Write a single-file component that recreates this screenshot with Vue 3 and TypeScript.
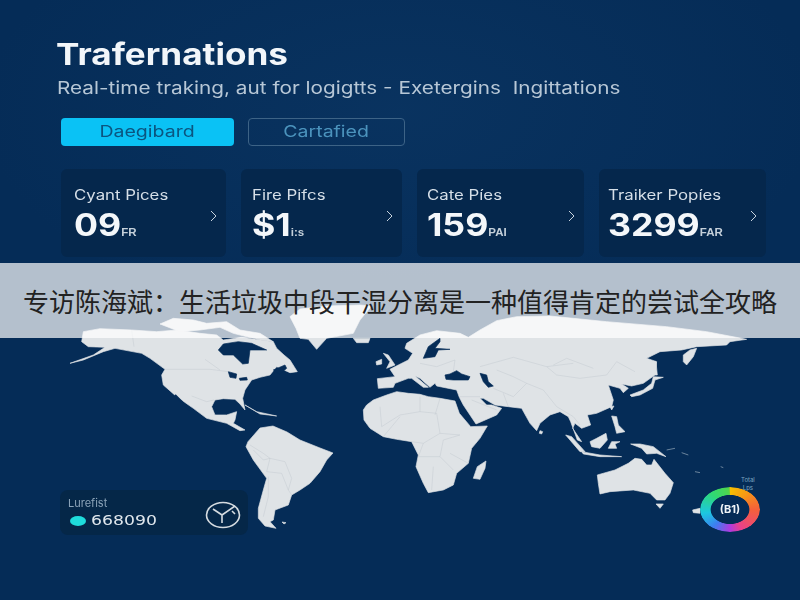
<script setup lang="ts">
interface Stat {
  label: string
  value: string
  unit: string
}

const stats: Stat[] = [
  { label: 'Cyant Pices', value: '09', unit: 'FR' },
  { label: 'Fire Pifcs', value: '$1', unit: 'i:s' },
  { label: 'Cate Píes', value: '159', unit: 'PAI' },
  { label: 'Traiker Popíes', value: '3299', unit: 'FAR' }
]

const borders: string[] = [
  'M215,90 L222,140', 'M315,208 L450,208 L505,215', 'M435,178 L480,210', 'M395,288 L440,305 L462,300'
]
const borders7: string[] = [
  'M120,320 L125,380 L180,345 L240,335 L240,290', 'M240,335 L290,340 L300,400 L360,405', 'M285,345 L300,295',
  'M130,410 L180,350', 'M215,425 L250,430 L300,400', 'M250,430 L235,470 L300,470 L340,510', 'M300,470 L310,420 L360,405',
  'M280,500 L275,570', 'M330,460 L385,490', 'M240,190 L290,200 L345,180 L340,215', 'M420,200 L520,172 L620,200 L700,190',
  'M620,200 L650,225 L720,235 L800,225 L830,185 L885,215', 'M460,265 L520,290 L560,250 L610,270 L650,320 L700,350',
  'M490,280 L505,320', 'M560,250 L520,230 L470,210', 'M640,195 L680,175 L760,205', 'M700,350 L720,375',
  'M360,290 L420,290', 'M395,300 L470,330'
]
const bordersS: string[] = [
  'M100,30 L130,60 L150,55 L195,65 L215,115 L205,150', 'M150,55 L140,95 L185,100 L205,150', 'M145,110 L145,170 L130,230',
  'M205,150 L215,165', 'M90,15 L130,40 L150,55'
]
</script>

<template>
  <main class="page">
    <svg class="map" viewBox="0 0 800 600" aria-hidden="true">
      <g transform="translate(60 300) scale(.3333)">
        <path class="land" d="M70,95 L120,86 L215,90 L290,95 L350,90 L420,100 L470,105 L490,120 L545,112 L640,125 L650,145 L672,165 L690,180 L712,215 L690,218 L650,200 L630,225 L600,232 L575,240 L565,255 L555,270 L548,295 L555,330 L540,312 L525,298 L490,296 L465,300 L455,320 L465,345 L500,345 L530,335 L525,360 L520,370 L555,390 L540,392 L500,370 L440,355 L400,325 L350,290 L310,255 L305,225 L315,208 L270,175 L245,160 L165,145 L130,155 L70,180 L30,190 L100,165 L135,142 L85,140 L65,125 Z" />
        <path class="land" d="M300,72 L340,55 L400,60 L440,70 L500,65 L540,90 L600,100 L640,125 L600,120 L520,100 L480,82 L420,90 L360,95 Z" />
        <path class="land" d="M690,50 L720,27 L800,18 L900,15 L935,18 L900,60 L880,100 L800,115 L770,148 L745,118 L720,115 L708,85 Z" />
        <path class="sea" d="M475,150 L490,132 L535,125 L575,130 L620,150 L570,150 L565,190 L548,192 L520,165 L490,165 Z" />
        <path class="sea" d="M640,210 L675,195 L680,205 L660,222 Z" />
        <path class="sea" d="M505,215 L530,222 L528,235 L510,232 Z" />
        <path class="sea" d="M538,235 L560,232 L562,240 L540,241 Z" />
        <path class="shore" d="M345,285 L390,330" />
        <path class="land" d="M555,315 L590,335 L650,348 L600,342 Z" />
        <path class="line" v-for="d in borders" :key="d" :d="d" />
      </g>

      <g transform="translate(340 300) scale(.3333)">
        <path class="land" d="M112,236 L165,230 L150,208 L175,195 L205,180 L218,160 L195,145 L200,130 L240,105 L290,92 L360,100 L385,112 L420,90 L470,62 L530,50 L630,48 L700,55 L800,65 L980,80 L1100,95 L1220,118 L1170,125 L1160,135 L1070,140 L1025,150 L960,155 L920,175 L950,185 L945,225 L910,250 L875,258 L845,252 L865,265 L850,278 L840,265 L805,255 L820,300 L815,320 L770,340 L742,345 L752,375 L725,385 L705,370 L698,385 L725,425 L712,420 L692,365 L685,350 L660,335 L630,345 L600,370 L590,392 L570,370 L545,325 L505,320 L465,315 L430,295 L420,295 L440,315 L455,315 L485,325 L470,345 L408,372 L370,315 L358,292 L350,270 L290,258 L285,250 L270,262 L240,235 L225,228 L265,262 L250,262 L215,235 L205,235 L165,250 L160,262 L115,265 Z" />
        <path class="land" d="M70,330 L80,315 L100,300 L140,285 L170,275 L205,280 L240,283 L265,290 L300,295 L345,303 L358,340 L392,380 L442,378 L420,415 L395,445 L385,490 L350,520 L340,555 L310,570 L265,578 L250,550 L228,500 L235,465 L215,425 L170,418 L130,410 L90,385 L72,360 Z" />
        <path class="sea" d="M250,175 L265,140 L300,115 L300,125 L285,145 L330,148 L295,150 L285,170 Z" />
        <path class="sea" d="M315,225 L330,222 L350,212 L365,222 L390,230 L385,240 L340,240 L318,238 Z" />
        <path class="sea" d="M420,220 L440,225 L445,245 L460,258 L445,262 L430,245 Z" />
        <path class="land" d="M130,160 L145,165 L165,195 L140,205 L150,185 Z" />
        <path class="land" d="M108,185 L125,178 L125,192 L110,195 Z" />
        <path class="land" d="M40,115 L90,115 L85,128 L50,128 Z" />
        <path class="land" d="M400,535 L412,500 L438,483 L435,505 L420,538 Z" />
        <path class="land" d="M600,392 L608,395 L605,402 L598,400 Z" />
        <path class="line" v-for="d in borders7" :key="d" :d="d" />
      </g>

      <g transform="translate(500 300) scale(.3333)">
        <path class="land" d="M197,405 L215,410 L255,455 L240,455 Z" />
        <path class="land" d="M245,455 L300,465 L365,470 L300,470 L250,462 Z" />
        <path class="land" d="M270,425 L290,415 L318,400 L322,420 L300,445 L275,440 Z" />
        <path class="land" d="M325,445 L335,425 L360,425 L345,432 L350,445 Z" />
        <path class="land" d="M335,348 L350,350 L355,375 L375,395 L350,400 L345,380 Z" />
        <path class="land" d="M392,432 L420,432 L460,440 L498,470 L470,460 L440,462 L425,445 Z" />
        <path class="land" d="M390,285 L430,270 L455,250 L460,230 L490,232 L465,240 L458,265 L420,285 L395,290 Z" />
        <path class="land" d="M462,185 L468,185 L472,225 L464,225 Z" />
        <path class="land" d="M550,165 L570,150 L590,145 L580,170 L560,195 L550,185 Z" />
        <path class="land" d="M330,320 L342,318 L335,330 Z" />
        <path class="land" d="M292,525 L345,510 L385,490 L405,475 L425,478 L440,495 L455,495 L462,478 L495,520 L520,548 L510,580 L495,600 L470,600 L450,580 L400,570 L330,575 L300,582 L295,550 Z" />
        <path class="land" d="M468,612 L490,612 L480,625 Z" />
        <path class="land" d="M578,630 L600,625 L600,640 L580,638 Z" />
        <path class="speck" d="M500,450 L525,445 M545,458 L565,465 M585,515 L600,518 M662,500 L670,503" />
      </g>

      <g transform="translate(220 440) scale(.3333)">
        <path class="land" d="M78,20 L84,5 L120,-36 L159,-42 L201,-24 L240,0 L300,24 L339,39 L320,60 L300,95 L270,130 L240,150 L215,165 L205,195 L165,210 L160,240 L150,245 L168,265 L135,258 L115,235 L115,205 L130,150 L140,115 L100,60 Z" />
        <path class="land" d="M186,246 L198,248 L192,252 Z" />
        <path class="line" v-for="d in bordersS" :key="d" :d="d" />
      </g>
    </svg>

    <section class="content">
      <h1 class="title"><span class="wide-title">Trafernations</span></h1>
      <p class="subtitle"><span class="wide-sub">Real-time traking, aut for logigtts - Exetergins&nbsp; Ingittations</span></p>

      <nav class="tabs">
        <button class="tab active" type="button"><span class="wide-tab">Daegibard</span></button>
        <button class="tab outline" type="button"><span class="wide-tab">Cartafied</span></button>
      </nav>

      <div class="stats">
        <article v-for="s in stats" :key="s.label" class="card">
          <div class="card-text">
            <div class="label"><span class="wide-label">{{ s.label }}</span></div>
            <div class="value"><span class="wide-value">{{ s.value }}<small>{{ s.unit }}</small></span></div>
          </div>
          <svg class="chevron" width="7" height="12" viewBox="0 0 7 12">
            <path d="M1,1 L6,6 L1,11" />
          </svg>
        </article>
      </div>
    </section>

    <aside class="live">
      <div>
        <div class="live-label">Lurefist</div>
        <div class="live-row"><i class="dot"></i><span class="wide-live">668090</span></div>
      </div>
      <svg class="clock" width="36" height="28" viewBox="0 0 36 28">
        <ellipse cx="18" cy="14" rx="16.5" ry="12.5" />
        <path d="M17,14 L8,8 M17,14 L30,5 M17,14 L17,22 M27,10 L30,13" />
      </svg>
    </aside>

    <aside class="gauge">
      <div class="gauge-caption">Total<br />Lps</div>
      <div class="ring"></div>
      <b class="ring-text">(B1)</b>
    </aside>

    <div class="banner">专访陈海斌：生活垃圾中段干湿分离是一种值得肯定的尝试全攻略</div>
  </main>
</template>

<style>
html,
body {
  margin: 0;
  background: #052c57;
}
</style>

<style scoped>
.page {
  position: relative;
  width: 800px;
  height: 600px;
  overflow: hidden;
  box-sizing: border-box;
  background:
    radial-gradient(ellipse 420px 220px at 400px 110px, rgba(26, 78, 130, 0.2), transparent),
    #052c57;
  font-family: Inter, "Liberation Sans", sans-serif;
}

.map {
  position: absolute;
  inset: 0;
  width: 800px;
  height: 600px;
  filter: blur(0.4px);
}

.land {
  fill: #dfe3e6;
  stroke: #dfe3e6;
  stroke-width: 2;
  stroke-linejoin: round;
}

.sea {
  fill: #052c57;
  stroke: #052c57;
  stroke-width: 2;
  stroke-linejoin: round;
}

.shore {
  fill: none;
  stroke: #052c57;
  stroke-width: 6;
}

.speck {
  fill: none;
  stroke: #9fb0c0;
  stroke-width: 2;
}

.line {
  fill: none;
  stroke: #bfc6cd;
  stroke-width: 1.3;
}

.content {
  position: relative;
  padding: 38px 33px 0 56px;
}

.title {
  margin: 0;
  font-size: 30px;
  line-height: 32px;
  font-weight: 700;
  color: #f2f6fa;
  filter: blur(0.3px);
}

.wide-title,
.wide-sub,
.wide-label,
.wide-value,
.wide-live {
  display: inline-block;
  transform-origin: left center;
}

.wide-tab {
  display: inline-block;
  transform: scaleX(1.22);
}

.wide-title {
  transform: scaleX(1.17);
}

.wide-sub {
  transform: scaleX(1.22);
}

.wide-label {
  transform: scaleX(1.2);
}

.wide-value {
  transform: scaleX(1.15);
}

.wide-live {
  transform: scaleX(1.28);
}

.subtitle {
  margin: 2px 0 0 1px;
  font-size: 17px;
  line-height: 32px;
  color: #b7c7d6;
  white-space: nowrap;
  filter: blur(0.3px);
}

.tabs {
  display: flex;
  gap: 14px;
  margin: 14px 0 0 5px;
}

.tab {
  height: 28px;
  padding: 0 0 2px;
  box-sizing: border-box;
  font-family: inherit;
  font-size: 16px;
  border-radius: 4px;
  filter: blur(0.3px);
}

.active {
  width: 173px;
  border: 0;
  background: #0ac2f5;
  color: #0b5580;
}

.outline {
  width: 157px;
  border: 1.5px solid #3d6386;
  background: transparent;
  color: #4b93bd;
}

.stats {
  display: grid;
  grid-template-columns: 165px 161px 167px 167px;
  gap: 15px;
  margin: 23px 0 0 5px;
}

.card {
  display: flex;
  justify-content: space-between;
  height: 88px;
  box-sizing: border-box;
  padding: 16px 9px 0 13px;
  border-radius: 6px;
  background: #05274c;
}

.card:nth-child(2) {
  padding-left: 11px;
}

.card:nth-child(3) {
  padding-left: 10px;
}

.card:nth-child(4) {
  padding-left: 9px;
}

.label {
  font-size: 14px;
  line-height: 20px;
  color: #d6dfe8;
  white-space: nowrap;
  filter: blur(0.25px);
}

.value {
  margin-top: 2px;
  font-size: 31px;
  line-height: 36px;
  font-weight: 700;
  color: #f4f7fa;
  white-space: nowrap;
  filter: blur(0.3px);
}

.value small {
  font-family: "Liberation Sans", sans-serif;
  font-size: 10px;
  font-weight: 700;
  color: #c5d0da;
}

.chevron {
  flex: none;
  margin-top: 25px;
}

.chevron path {
  fill: none;
  stroke: #c6d2dd;
  stroke-width: 1;
}

.live {
  position: absolute;
  left: 60px;
  top: 490px;
  width: 188px;
  height: 45px;
  box-sizing: border-box;
  padding: 7px 9px 0 8px;
  display: flex;
  justify-content: space-between;
  border-radius: 8px;
  background: #052748;
}

.live-label {
  font-size: 11px;
  line-height: 12px;
  color: #8ba3b8;
  filter: blur(0.3px);
}

.live-row {
  display: flex;
  align-items: center;
  gap: 5px;
  margin: 3px 0 0 2px;
  font-family: "DejaVu Sans", sans-serif;
  font-size: 13.5px;
  line-height: 17px;
  color: #dfe6ec;
  filter: blur(0.3px);
}

.dot {
  width: 16px;
  height: 10px;
  border-radius: 50%;
  background: #1fdcdc;
}

.clock {
  margin: 4px -2px 0 0;
}

.clock ellipse,
.clock path {
  fill: none;
  stroke: #d5dbe0;
  stroke-width: 1.6;
}

.gauge {
  position: absolute;
  left: 700px;
  top: 476px;
  width: 60px;
  height: 56px;
}

.gauge-caption {
  position: absolute;
  left: 41px;
  top: 0;
  font-size: 6px;
  line-height: 7.5px;
  color: #7ea6c0;
  text-align: center;
}

.ring {
  position: absolute;
  left: 0;
  top: 11px;
  width: 60px;
  height: 45px;
  border-radius: 50%;
  background: conic-gradient(#f8c000 0deg, #f59a14 45deg, #f4603a 90deg, #e8408c 150deg, #b03ae0 180deg, #3b7ff0 225deg, #1cc8e0 262deg, #2fd874 310deg, #52d64a 358deg, #f8c000 360deg);
  -webkit-mask: radial-gradient(ellipse closest-side, transparent 63%, #000 66%);
  mask: radial-gradient(ellipse closest-side, transparent 63%, #000 66%);
}

.ring-text {
  position: absolute;
  left: 0;
  right: 0;
  top: 27px;
  text-align: center;
  font-size: 11px;
  line-height: 13px;
  color: #eef3f7;
  filter: blur(0.3px);
}

.banner {
  position: absolute;
  left: 0;
  right: 0;
  top: 263px;
  height: 75px;
  display: flex;
  align-items: center;
  justify-content: center;
  background: rgba(255, 255, 255, 0.7);
  color: #222;
  font-family: "Noto Sans CJK SC", sans-serif;
  font-size: 26px;
  white-space: nowrap;
}
</style>
